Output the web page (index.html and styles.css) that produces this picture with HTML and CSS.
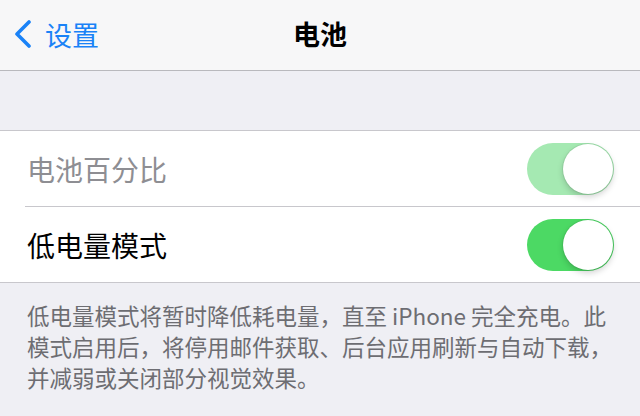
FILE: index.html
```html
<!DOCTYPE html>
<html lang="zh-CN">
<head>
    <meta charset="UTF-8">
    <meta name="viewport" content="width=device-width, initial-scale=1.0">
    <title>电池</title>
    <link rel="stylesheet" href="styles.css">
</head>
<body>
    <div class="nav-bar">
        <a href="#" class="back-link">
            <svg class="back-icon" width="18" height="28" viewBox="0 0 18 28">
                <polyline points="15,2 3,14 15,26" fill="none" stroke="#1a82f7" stroke-width="3.6" stroke-linecap="round" stroke-linejoin="round"/>
            </svg>
            <span>设置</span>
        </a>
        <h1 class="nav-title">电池</h1>
    </div>

    <div class="group-gap"></div>

    <div class="cell-group">
        <div class="cell">
            <span class="cell-label disabled">电池百分比</span>
            <span class="switch on disabled"><span class="knob"></span></span>
        </div>
        <div class="cell">
            <span class="cell-label">低电量模式</span>
            <span class="switch on"><span class="knob"></span></span>
        </div>
    </div>

    <p class="group-footer">低电量模式将暂时降低耗电量，直至 iPhone 完全充电。此<br>模式启用后，将停用邮件获取、后台应用刷新与自动下载，<br>并减弱或关闭部分视觉效果。</p>
</body>
</html>
```

FILE: styles.css
```css
/* iOS 设置页 - 电池 */
body {
    font-family: "Noto Sans CJK SC", "Noto Sans", sans-serif;
    margin: 0;
    padding: 0;
    background-color: #efeff4;
    min-height: 100vh;
}
.nav-bar {
    height: 71px;
    background-color: #f7f7f8;
    border-bottom: 1px solid #b9b9bd;
    display: flex;
    align-items: center;
    justify-content: center;
    position: relative;
    box-sizing: border-box;
}
.back-link {
    position: absolute;
    left: 14px;
    top: 0;
    height: 68px;
    display: flex;
    align-items: center;
    gap: 13px;
    color: #1a82f7;
    text-decoration: none;
    font-size: 27px;
}
.back-icon {
    display: block;
}
.nav-title {
    margin: 0;
    font-size: 27px;
    font-weight: 600;
    color: #000;
    padding-bottom: 3px;
}
.group-gap {
    height: 59px;
}
.cell-group {
    background-color: #fff;
    border-top: 1px solid #c8c7cc;
    border-bottom: 1px solid #c8c7cc;
}
.cell {
    height: 75px;
    display: flex;
    align-items: center;
    justify-content: space-between;
    margin-left: 25px;
    padding: 0 26px 0 2px;
}
.cell + .cell {
    border-top: 1px solid #c8c7cc;
}
.cell-label {
    font-size: 28px;
    color: #000;
}
.cell-label.disabled {
    color: #8e8e93;
}
/* 开关 */
.switch {
    width: 87px;
    height: 52px;
    border-radius: 26px;
    background-color: #4cd964;
    position: relative;
    box-sizing: border-box;
}
.switch.disabled {
    background-color: #a5e9b2;
}
.knob {
    position: absolute;
    right: 1px;
    top: 1px;
    width: 50px;
    height: 50px;
    border-radius: 50%;
    background-color: #fff;
    box-shadow: 0 3px 6px rgba(0,0,0,0.18), 0 0 0 1px rgba(0,0,0,0.06);
}
.group-footer {
    margin: 0;
    padding: 17px 0 0 27px;
    font-size: 22.5px;
    line-height: 31px;
    color: #6d6d72;
    white-space: nowrap;
}
```
